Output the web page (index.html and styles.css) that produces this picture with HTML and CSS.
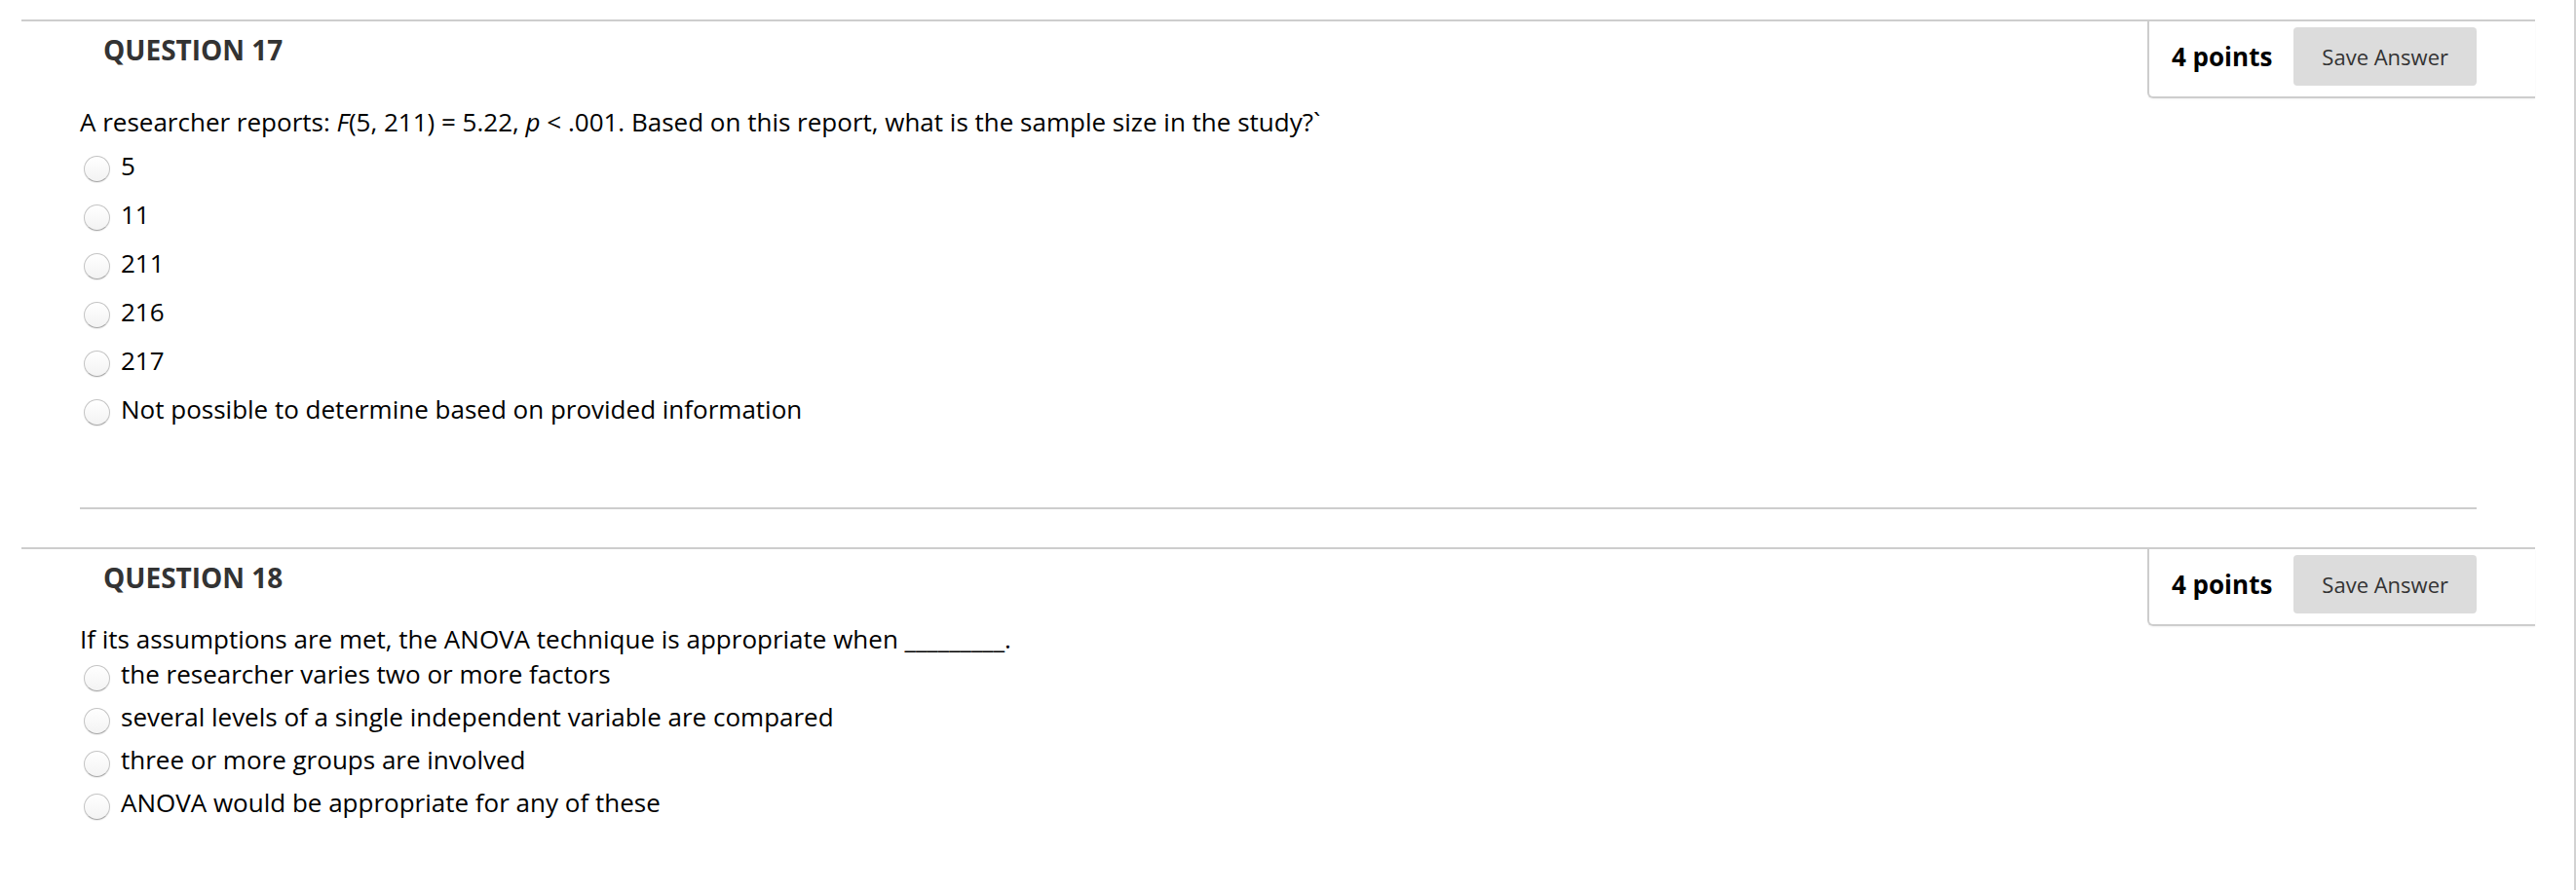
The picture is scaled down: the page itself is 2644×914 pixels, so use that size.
FILE: index.html
```html
<!DOCTYPE html>
<html lang="en">
<head>
<meta charset="utf-8">
<title>Questions</title>
<link rel="stylesheet" href="styles.css">
</head>
<body>
<div class="page">
  <section class="question">
    <div class="q-head">
      <h3 class="q-title">QUESTION 17</h3>
      <div class="points-box">
        <span class="points">4 points</span>
        <button class="save-btn" type="button">Save Answer</button>
      </div>
    </div>
    <div class="q-body q-body--sep">
      <p class="q-text">A researcher reports: <i>F</i>(5, 211) = 5.22, <i>p</i> &lt; .001. Based on this report, what is the sample size in the study?`</p>
      <ul class="options">
        <li class="option"><input class="radio" type="radio" name="q17"><span>5</span></li>
        <li class="option"><input class="radio" type="radio" name="q17"><span>11</span></li>
        <li class="option"><input class="radio" type="radio" name="q17"><span>211</span></li>
        <li class="option"><input class="radio" type="radio" name="q17"><span>216</span></li>
        <li class="option"><input class="radio" type="radio" name="q17"><span>217</span></li>
        <li class="option"><input class="radio" type="radio" name="q17"><span>Not possible to determine based on provided information</span></li>
      </ul>
    </div>
  </section>

  <section class="question">
    <div class="q-head">
      <h3 class="q-title">QUESTION 18</h3>
      <div class="points-box">
        <span class="points">4 points</span>
        <button class="save-btn" type="button">Save Answer</button>
      </div>
    </div>
    <div class="q-body">
      <p class="q-text q-text--tight">If its assumptions are met, the ANOVA technique is appropriate when _________.</p>
      <ul class="options options--compact">
        <li class="option"><input class="radio" type="radio" name="q18"><span>the researcher varies two or more factors</span></li>
        <li class="option"><input class="radio" type="radio" name="q18"><span>several levels of a single independent variable are compared</span></li>
        <li class="option"><input class="radio" type="radio" name="q18"><span>three or more groups are involved</span></li>
        <li class="option"><input class="radio" type="radio" name="q18"><span>ANOVA would be appropriate for any of these</span></li>
      </ul>
    </div>
  </section>
</div>
</body>
</html>
```

FILE: styles.css
```css
* {
  box-sizing: border-box;
}

html,
body {
  margin: 0;
  padding: 0;
  background: #fff;
}

body {
  font-family: "Open Sans", "Liberation Sans", sans-serif;
  color: #000;
}

.page {
  min-height: 914px;
  padding-top: 20px;
  border-right: 2px solid #d2d2d2;
}

.question {
  margin: 0 40px 39px 22px;
  border-top: 2px solid #cdcdcd;
}

.q-head {
  display: flex;
  justify-content: space-between;
  align-items: flex-start;
}

.q-title {
  margin: 12px 0 0 84px;
  font-size: 28px;
  line-height: 34px;
  font-weight: 700;
  color: #333;
}

.points-box {
  display: flex;
  align-items: center;
  gap: 22px;
  height: 79px;
  padding: 6px 60px 11px 23px;
  border-left: 2px solid #cdcdcd;
  border-bottom: 2px solid #cdcdcd;
  border-bottom-left-radius: 6px;
  box-shadow: 0 1px 2px rgba(0, 0, 0, 0.05);
}

.points {
  font-size: 26px;
  font-weight: 700;
  color: #000;
}

.save-btn {
  height: 60px;
  padding: 0 29px;
  font-family: "Open Sans", "Liberation Sans", sans-serif;
  font-size: 22px;
  color: #333;
  background: #dcdcdc;
  border: 0;
  border-radius: 4px;
}

.q-body {
  margin: 0 60px;
}

.q-body--sep {
  padding-bottom: 83px;
  border-bottom: 2px solid #cdcdcd;
}

.q-text {
  margin: 6px 0 9px;
  font-size: 26px;
  line-height: 36px;
}

.q-text--tight {
  margin: -5px 0 0;
}

.options {
  list-style: none;
  margin: 0;
  padding: 0 0 0 4px;
  display: flex;
  flex-direction: column;
  gap: 14px;
}

.options--compact {
  gap: 8px;
}

.option {
  display: flex;
  align-items: flex-start;
  gap: 11px;
  font-size: 26px;
  line-height: 36px;
}

.radio {
  appearance: none;
  -webkit-appearance: none;
  flex: none;
  width: 27px;
  height: 27px;
  margin: 8px 0 0;
  border-radius: 50%;
  border: 1px solid #c4c4c4;
  border-bottom-color: #a9a9a9;
  background: linear-gradient(#ffffff, #f3f3f3);
  box-shadow: 0 1px 1px rgba(0, 0, 0, 0.08);
}

.options--compact .radio {
  margin-top: 9px;
}
```
